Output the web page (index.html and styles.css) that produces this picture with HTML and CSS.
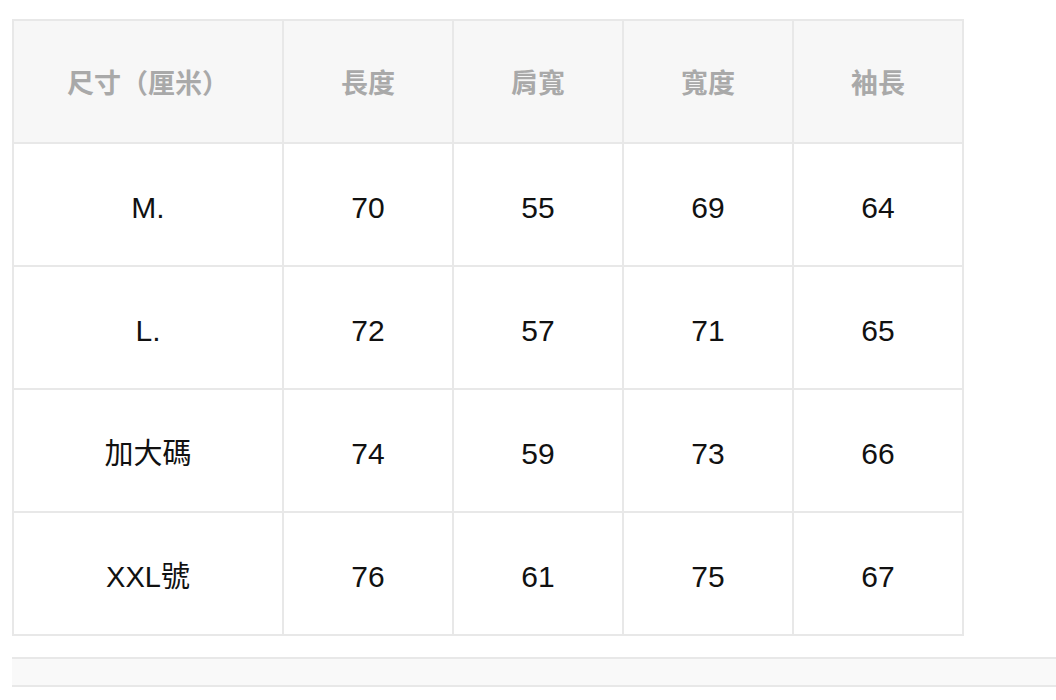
FILE: index.html
```html
<!DOCTYPE html>
<html lang="zh-Hant">
<head>
<meta charset="utf-8">
<link rel="stylesheet" href="styles.css">
</head>
<body>
<div class="page">
  <table class="size-table">
    <colgroup>
      <col class="col-first">
      <col class="col-data">
      <col class="col-data">
      <col class="col-data">
      <col class="col-data">
    </colgroup>
    <thead>
      <tr>
        <th>尺寸（厘米）</th>
        <th>長度</th>
        <th>肩寬</th>
        <th>寬度</th>
        <th>袖長</th>
      </tr>
    </thead>
    <tbody>
      <tr><td>M.</td><td>70</td><td>55</td><td>69</td><td>64</td></tr>
      <tr><td>L.</td><td>72</td><td>57</td><td>71</td><td>65</td></tr>
      <tr><td class="cjk">加大碼</td><td>74</td><td>59</td><td>73</td><td>66</td></tr>
      <tr><td class="cjk">XXL號</td><td>76</td><td>61</td><td>75</td><td>67</td></tr>
    </tbody>
  </table>
  <div class="bottom-bar"></div>
</div>
</body>
</html>
```

FILE: styles.css
```css
html, body {
  margin: 0;
  padding: 0;
  background: #ffffff;
}

body {
  font-family: "Liberation Sans", "Noto Sans CJK TC", sans-serif;
  color: #111111;
}

.page {
  padding: 19px 0 0 12px;
}

.size-table {
  border-collapse: collapse;
  table-layout: fixed;
  width: 950px;
  border: 2px solid #e8e8e8;
}

.col-first {
  width: 270px;
}

.col-data {
  width: 170px;
}

.size-table th,
.size-table td {
  border: 2px solid #e8e8e8;
  height: 121px;
  padding: 0;
  text-align: center;
  vertical-align: middle;
}

.size-table th {
  background: #f7f7f7;
  color: #a9a9a9;
  font-weight: 700;
  font-size: 27px;
  font-family: "Noto Sans CJK TC", sans-serif;
}

.size-table td {
  font-size: 30px;
  color: #111111;
  height: 115px;
  padding-top: 6px;
}

.size-table td.cjk {
  font-size: 29px;
  height: 121px;
  padding-top: 0;
}

.bottom-bar {
  margin-top: 21px;
  height: 26px;
  background: #f9f9f9;
  border-top: 2px solid #e8e8e8;
  border-bottom: 2px solid #e8e8e8;
}
```
